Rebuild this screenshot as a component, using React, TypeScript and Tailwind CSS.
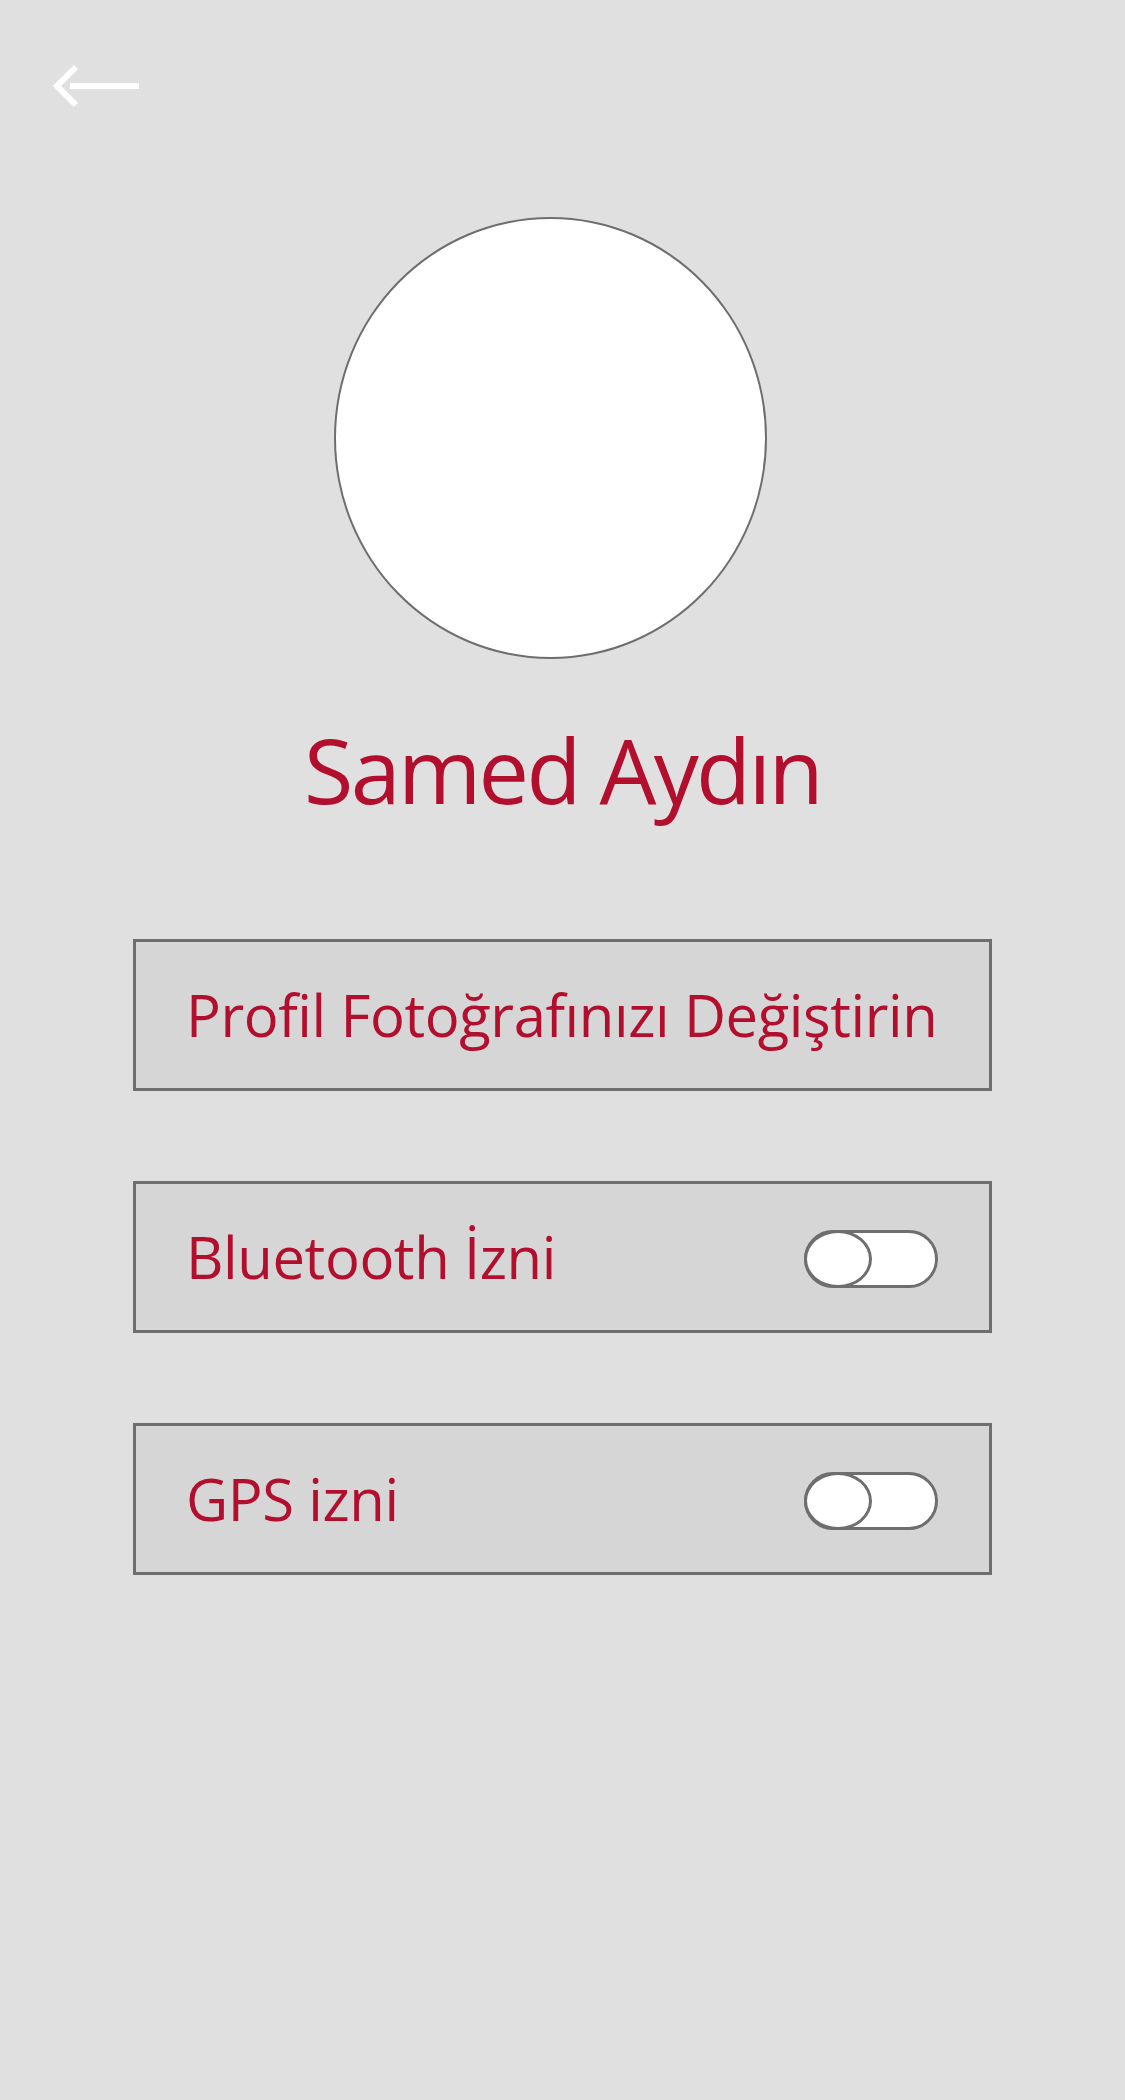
const RED = "text-[#b20f2e]";

function BackArrow() {
  return (
    <svg width="88" height="44" viewBox="0 0 88 44" fill="none">
      <path d="M24 3 L5 22 L24 41" stroke="#ffffff" strokeWidth="6" strokeLinejoin="miter" />
      <path d="M18 22 H87" stroke="#ffffff" strokeWidth="6" />
    </svg>
  );
}

function Toggle() {
  return (
    <div className="relative h-[58px] w-[134px] rounded-full border-[3px] border-[#6e6e6e] bg-white">
      <div className="absolute -left-[3px] -top-[3px] h-[58px] w-[68px] rounded-[50%] border-[3px] border-[#6e6e6e] bg-white" />
    </div>
  );
}

function Row({ label, toggle }: { label: string; toggle?: boolean }) {
  return (
    <div className="flex h-[152px] items-center justify-between border-[3px] border-[#6e6e6e] bg-[#d6d6d6] pl-[50px] pr-[51px]">
      <span className={`whitespace-nowrap text-[58px] leading-none tracking-[-0.007em] ${RED}`}>{label}</span>
      {toggle && (
        <div className="pt-[3px]">
          <Toggle />
        </div>
      )}
    </div>
  );
}

export default function App() {
  return (
    <div className="min-h-screen bg-[#e0e0e0] font-['Open_Sans',sans-serif]">
      <div className="pl-[52px] pt-[64px]">
        <BackArrow />
      </div>

      <div className="ml-[334px] mt-[109px] h-[442px] w-[433px] rounded-[50%] border-[2.5px] border-[#6e6e6e] bg-white" />

      <h1 className={`mt-[65px] text-center text-[90px] font-normal leading-none tracking-[-0.03em] ${RED}`}>
        Samed Aydın
      </h1>

      <div className="mx-[133px] mt-[125px] flex flex-col gap-[90px]">
        <Row label="Profil Fotoğrafınızı Değiştirin" />
        <Row label="Bluetooth İzni" toggle />
        <Row label="GPS izni" toggle />
      </div>
    </div>
  );
}
